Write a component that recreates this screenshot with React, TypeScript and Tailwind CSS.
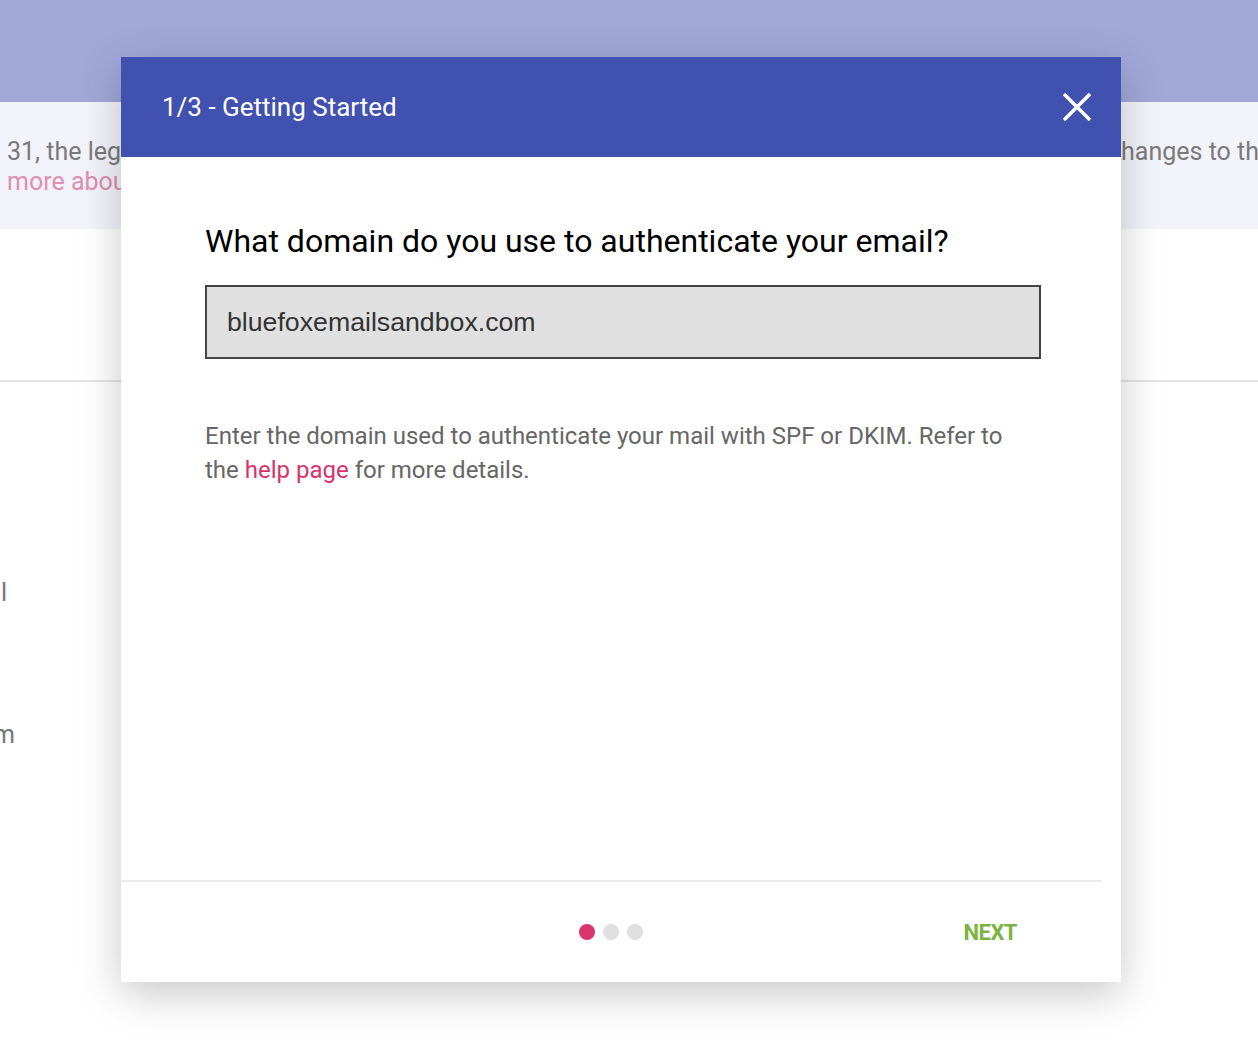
import React from "react";

function CloseIcon() {
  return (
    <svg width="30" height="30" viewBox="0 0 30 30" fill="none">
      <path d="M2 2L28 28M28 2L2 28" stroke="white" strokeWidth="3.5" strokeLinecap="butt" />
    </svg>
  );
}

export default function App() {
  return (
    <div className="relative w-full h-[1040px] overflow-hidden bg-white font-['Roboto',sans-serif]">
      {/* page behind the dialog */}
      <div className="h-[102px] bg-[#a1a8d8]" />
      <div className="h-[127px] bg-[#f3f3fb] flex justify-between pt-[35px] text-[25px] leading-[30px] text-[#7a7a7a]">
        <div className="pl-[7px] whitespace-nowrap">
          <div>31, the legacy sender rules will change</div>
          <div className="text-[#e08fae]">more about it</div>
        </div>
        <div className="w-[150px] overflow-hidden whitespace-nowrap">
          <div>changes to the</div>
        </div>
      </div>
      <div className="h-[153px] border-b-2 border-[#e4e4e4]" />
      <div className="text-[25px] text-[#777] leading-[30px]">
        <div className="pt-[196px] pl-[1px]">l</div>
        <div className="pt-[112px] -ml-[7px]">m</div>
      </div>

      {/* dialog */}
      <div className="absolute left-[121px] top-[57px] w-[1000px] h-[925px] bg-white flex flex-col shadow-[0_12px_40px_rgba(0,0,0,0.22)]">
        <div className="h-[100px] bg-[#4051b0] flex items-center justify-between pl-[41px] pr-[29px]">
          <h2 className="text-white text-[26px] font-normal">1/3 - Getting Started</h2>
          <button className="w-[30px] h-[30px] flex items-center justify-center">
            <CloseIcon />
          </button>
        </div>

        <div className="flex-1 pl-[84px] pr-[80px] pt-[64px]">
          <h1 className="text-black text-[32px] leading-[40px]">What domain do you use to authenticate your email?</h1>
          <div className="mt-[24px] h-[74px] w-[836px] bg-[#e0e0e0] border-2 border-[#444] flex items-center pl-[20px]">
            <input
              type="text"
              value="bluefoxemailsandbox.com"
              readOnly
              className="w-full bg-transparent outline-none text-[26.7px] text-[#333] font-['Liberation_Sans',Arial,sans-serif]"
            />
          </div>
          <p className="mt-[60px] text-[24px] leading-[34px] text-[#666] w-[830px]">
            Enter the domain used to authenticate your mail with SPF or DKIM. Refer to the{" "}
            <a className="text-[#d6336c] cursor-pointer">help page</a> for more details.
          </p>
        </div>

        <div className="mr-[20px] border-t-2 border-[#ececec]" />
        <div className="h-[100px] flex items-center pr-[104px]">
          <div className="flex-1 flex justify-center gap-[8px] pl-[138px]">
            <span className="w-[16px] h-[16px] rounded-full bg-[#d8356a]" />
            <span className="w-[16px] h-[16px] rounded-full bg-[#e0e0e0]" />
            <span className="w-[16px] h-[16px] rounded-full bg-[#e0e0e0]" />
          </div>
          <button className="text-[#7cb342] text-[22px] font-bold tracking-[-0.5px]">NEXT</button>
        </div>
      </div>
    </div>
  );
}
